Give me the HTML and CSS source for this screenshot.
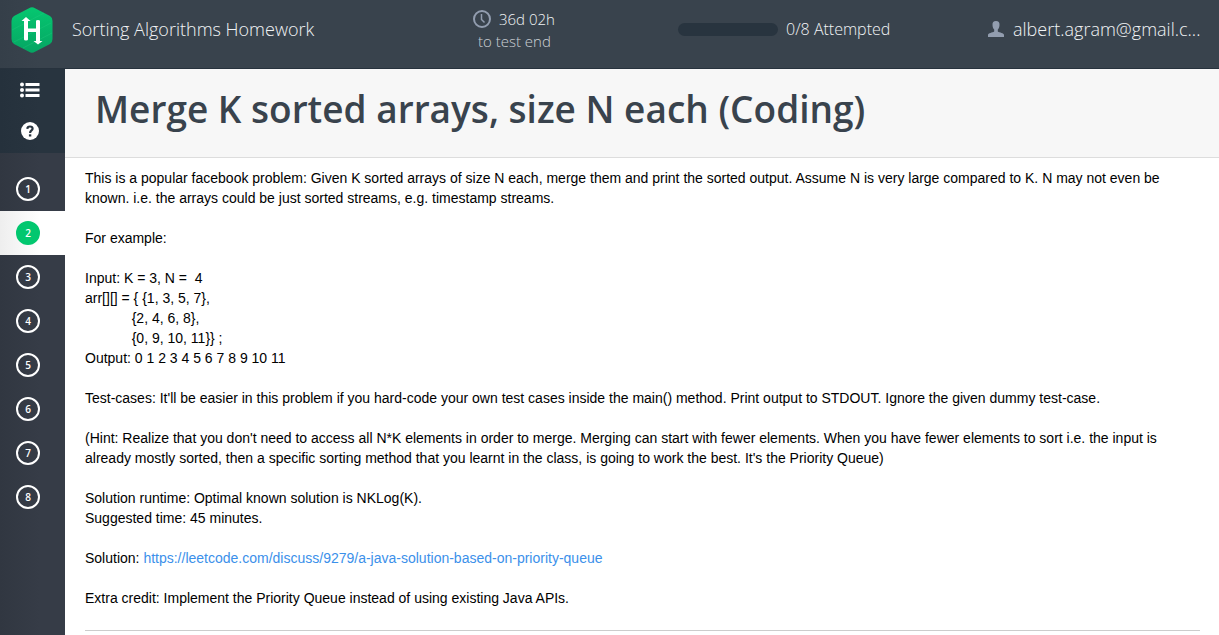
FILE: index.html
```html
<!DOCTYPE html>
<html lang="en">
<head>
<meta charset="utf-8">
<title>Sorting Algorithms Homework</title>
<link rel="stylesheet" href="styles.css">
</head>
<body>
<header class="topbar">
  <a class="logo" href="#" aria-label="Home">
    <svg width="42" height="46" viewBox="0 0 42 46">
      <defs><linearGradient id="green" x1="0" y1="0" x2="0" y2="1"><stop offset="0" stop-color="#05c770"/><stop offset="1" stop-color="#06a563"/></linearGradient></defs>
      <path fill="url(#green)" d="M18 1.2Q21-.6 24 1.2L39 9Q41.500 10.500 41.500 14V32Q41.500 35.500 39 37L24 44.800Q21 46.600 18 44.800L3 37Q.5 35.500.5 32V14Q.5 10.500 3 9Z"/>
      <path d="M1 23 33 6M3 35 40 16M12 41 41 26" stroke="#28cf83" stroke-opacity=".3" fill="none"/>
      <path fill="#fff" d="M15 10 19.500 14H17V21.500H25V14Q25 13 27 13T29 14V34H31.500L27 37.500 22.500 34H25V25H17V32.500Q17 33.500 15 33.500T13 32.500V14H10.500Z"/>
    </svg>
  </a>
  <div class="test-name">Sorting Algorithms Homework</div>
  <div class="timer">
    <div class="timer-value">
      <svg width="18" height="18" viewBox="0 0 18 18" fill="none" stroke="#929daf" stroke-width="2"><circle cx="9" cy="9" r="8"/><path d="M8.500 4V9.500L11.500 12.500" stroke-width="1.500"/></svg>
      <span>36d 02h</span>
    </div>
    <div class="timer-label">to test end</div>
  </div>
  <div class="attempts"><span class="track"></span><span>0/8 Attempted</span></div>
  <a class="account" href="#">
    <svg width="16" height="16" viewBox="0 0 16 16" fill="#929daf"><path d="M8 0C10.500 0 11.700 1.600 11.500 4 11.400 6 10.800 7.600 9.800 8.600V10.500C11.500 11.600 16 12 16 14V16H0V14C0 12 4.500 11.600 6.200 10.500V8.600C5.200 7.600 4.600 6 4.500 4 4.300 1.600 5.500 0 8 0Z"/></svg>
    <span>albert.agram@gmail.c...</span>
  </a>
</header>
<div class="layout">
  <nav class="sidebar" aria-label="Questions">
    <div class="tools">
      <button class="tool" aria-label="Question list"><svg width="20" height="16" viewBox="0 0 20 16" fill="#fff"><circle cx="2" cy="2.500" r="2"/><circle cx="2" cy="8" r="2"/><circle cx="2" cy="13.500" r="2"/><path d="M5.500 1H19.500V4H5.500ZM5.500 6.500H19.500V9.500H5.500ZM5.500 12H19.500V15H5.500Z"/></svg></button>
      <button class="tool" aria-label="Help"><svg width="18" height="18" viewBox="0 0 18 18"><circle cx="9" cy="9" r="9" fill="#fff"/><path d="M6.300 6.800Q6.500 4.500 9 4.500T11.600 6.700C11.600 8.500 9.100 8.400 9.100 11" fill="none" stroke="#28343f" stroke-width="2.200"/><path d="M7.900 12.300H10.300V14.500H7.900Z" fill="#28343f"/></svg></button>
    </div>
    <div class="questions">
      <a class="question" href="#"><span class="number">1</span></a>
      <a class="question active" href="#" aria-current="page"><span class="number">2</span></a>
      <a class="question" href="#"><span class="number">3</span></a>
      <a class="question" href="#"><span class="number">4</span></a>
      <a class="question" href="#"><span class="number">5</span></a>
      <a class="question" href="#"><span class="number">6</span></a>
      <a class="question" href="#"><span class="number">7</span></a>
      <a class="question" href="#"><span class="number">8</span></a>
    </div>
  </nav>
  <main class="content">
    <div class="title-bar"><h1 class="title">Merge K sorted arrays, size N each (Coding)</h1></div>
    <article class="statement">
      <p>This is a popular facebook problem: Given K sorted arrays of size N each, merge them and print the sorted output. Assume N is very large compared to K. N may not even be known. i.e. the arrays could be just sorted streams, e.g. timestamp streams.</p>
      <p>For example:</p>
      <p class="example">Input: K = 3, N =  4
arr[][] = { {1, 3, 5, 7},
            {2, 4, 6, 8},
            {0, 9, 10, 11}} ;
Output: 0 1 2 3 4 5 6 7 8 9 10 11</p>
      <p>Test-cases: It'll be easier in this problem if you hard-code your own test cases inside the main() method. Print output to STDOUT. Ignore the given dummy test-case.</p>
      <p>(Hint: Realize that you don't need to access all N*K elements in order to merge. Merging can start with fewer elements. When you have fewer elements to sort i.e. the input is already mostly sorted, then a specific sorting method that you learnt in the class, is going to work the best. It's the Priority Queue)</p>
      <p>Solution runtime: Optimal known solution is NKLog(K).<br>Suggested time: 45 minutes.</p>
      <p>Solution: <a class="link" href="https://leetcode.com/discuss/9279/a-java-solution-based-on-priority-queue">https://leetcode.com/discuss/9279/a-java-solution-based-on-priority-queue</a></p>
      <p>Extra credit: Implement the Priority Queue instead of using existing Java APIs.</p>
    </article>
  </main>
</div>
</body>
</html>
```
FILE: styles.css
```css
* { box-sizing: border-box; }
body {
  margin: 0;
  min-height: 100vh;
  display: flex;
  flex-direction: column;
  background: #fff;
  color: #000;
  font: 14px/20px "Liberation Sans", Arial, sans-serif;
}
.topbar {
  display: grid;
  grid-template-columns: 42px 420fr 205fr 310fr 212px;
  padding: 0 19px 0 11px;
  height: 69px;
  border-bottom: 1px solid #27323d;
  background: linear-gradient(90deg, #353f49, #39434d 40px);
  color: #f1f3f5;
  font-family: "Open Sans", "Noto Sans", sans-serif;
  font-weight: 300;
}
.logo { padding-top: 7px; }
.logo svg, .tool svg, .timer svg, .account svg { display: block; flex: none; }
.test-name { padding: 19px 0 0 19px; font-size: 18px; white-space: nowrap; }
.timer { padding-top: 8px; font-size: 15px; line-height: 22px; white-space: nowrap; }
.timer-value { display: flex; align-items: center; gap: 8px; }
.timer-label { padding-left: 5px; color: #ccd1d6; }
.attempts { display: flex; align-items: center; gap: 8px; height: 58px; font-size: 16px; white-space: nowrap; }
.track { flex: none; width: 100px; height: 13px; border-radius: 7px; background: #28343f; }
.account { display: flex; align-items: center; gap: 9px; height: 58px; color: inherit; font-size: 18px; text-decoration: none; white-space: nowrap; }
.layout { flex: 1; display: flex; }
.sidebar { flex: none; width: 65px; background: linear-gradient(90deg, #313741, #363c47 40px); }
.tools { padding-bottom: 2px; background: linear-gradient(90deg, #25313c, #28343f 40px); }
.tool {
  display: flex;
  align-items: center;
  width: 100%;
  height: 41px;
  padding: 0 0 0 20px;
  border: 0;
  background: none;
}
.tool + .tool { padding-left: 21px; }
.questions { padding-top: 14px; }
.question { display: flex; align-items: center; height: 44px; padding-left: 16px; text-decoration: none; }
.number {
  display: grid;
  place-items: center;
  width: 24px;
  height: 24px;
  border: 2px solid #fff;
  border-radius: 50%;
  color: #fff;
  font: 600 10px/14px "Open Sans", "Noto Sans", sans-serif;
}
.active { background: linear-gradient(90deg, #eee, #fff 40px); }
.active .number { border-color: #02c76f; background: #02c76f; }
.content { flex: 1; min-width: 0; }
.title-bar { padding: 16px 30px 24px; border-bottom: 1px solid #ddd; background: #f7f7f7; }
.title { margin: 0; color: #39434d; font: 600 37px/48px "Open Sans", "Noto Sans", sans-serif; }
.statement { margin: 0 19px 0 20px; padding: 10px 0 22px; border-bottom: 1px solid #ccc; }
.statement p { margin: 0 0 20px; }
.statement p:last-child { margin-bottom: 0; }
.statement .example { white-space: pre-wrap; }
.link { color: #3b90ea; text-decoration: none; }
```
